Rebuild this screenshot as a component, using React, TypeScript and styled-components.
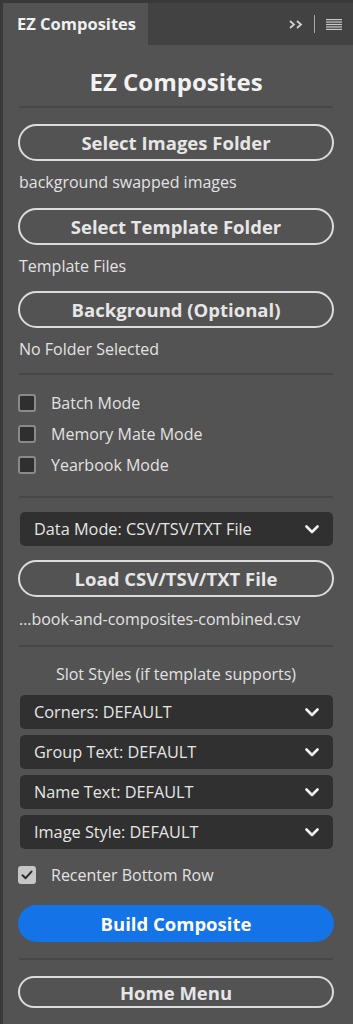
import React from 'react'
import styled, { createGlobalStyle } from 'styled-components'

const GlobalStyle = createGlobalStyle`
  html, body {
    margin: 0;
    padding: 0;
    background: #393939;
  }
  body {
    font-family: 'Open Sans', 'Liberation Sans', sans-serif;
  }
  * {
    box-sizing: border-box;
  }
`

const Frame = styled.div`
  width: 353px;
  height: 1024px;
  padding: 3px 0 0 3px;
  background: #393939;
  display: flex;
  flex-direction: column;
  overflow: hidden;
`

const Header = styled.div`
  height: 42px;
  flex-shrink: 0;
  display: flex;
  align-items: stretch;
  background: #424242;
`

const Tab = styled.div`
  width: 145px;
  background: #535353;
  display: flex;
  align-items: center;
  padding: 0 0 2px 14px;
  color: #f0f0f0;
  font-size: 16.5px;
  font-weight: 700;
`

const HeaderTools = styled.div`
  margin-left: auto;
  display: flex;
  align-items: center;
  gap: 11px;
  padding-right: 11px;
`

const ToolSeparator = styled.span`
  width: 1px;
  height: 18px;
  background: #a8a8a8;
`

const Body = styled.div`
  flex: 1;
  background: #535353;
  padding: 0 19px 0 15px;
  display: flex;
  flex-direction: column;
`

const Title = styled.h1`
  margin: 23px 0 0;
  height: 28px;
  line-height: 28px;
  text-align: center;
  color: #f2f2f2;
  font-size: 24px;
  font-weight: 700;
`

const Divider = styled.div<{ $mt: number }>`
  height: 2px;
  margin: ${(p) => p.$mt}px 1px 0;
  background: #474747;
`

const PillButton = styled.button<{ $mt: number; $primary?: boolean; $height?: number }>`
  margin-top: ${(p) => p.$mt}px;
  width: 100%;
  height: ${(p) => p.$height ?? 37}px;
  border-radius: 20px;
  border: ${(p) => (p.$primary ? 'none' : '2px solid #dcdcdc')};
  background: ${(p) => (p.$primary ? '#1473e6' : 'transparent')};
  color: ${(p) => (p.$primary ? '#ffffff' : '#e6e6e6')};
  font-family: 'Open Sans', 'Liberation Sans', sans-serif;
  font-size: 18.5px;
  font-weight: 700;
  display: flex;
  align-items: center;
  justify-content: center;
  padding: 0;
  cursor: pointer;
`

const Note = styled.div<{ $mt: number }>`
  margin-top: ${(p) => p.$mt}px;
  height: 20px;
  line-height: 20px;
  padding-left: 1px;
  color: #e2e2e2;
  font-size: 16px;
  white-space: nowrap;
`

const SectionLabel = styled.div<{ $mt: number }>`
  margin-top: ${(p) => p.$mt}px;
  height: 20px;
  line-height: 20px;
  text-align: center;
  color: #e2e2e2;
  font-size: 16px;
`

const CheckList = styled.div<{ $mt: number }>`
  margin-top: ${(p) => p.$mt}px;
  display: flex;
  flex-direction: column;
  gap: 13px;
`

const CheckRow = styled.label`
  height: 18px;
  display: flex;
  align-items: center;
  gap: 15px;
  color: #e2e2e2;
  font-size: 16px;
`

const Box = styled.span<{ $checked?: boolean }>`
  width: 18px;
  height: 18px;
  flex-shrink: 0;
  border-radius: 3px;
  border: 2px solid ${(p) => (p.$checked ? '#c6c6c6' : '#8a8a8a')};
  background: ${(p) => (p.$checked ? '#c6c6c6' : '#2f2f2f')};
  display: flex;
  align-items: center;
  justify-content: center;
`

const SelectGroup = styled.div<{ $mt: number }>`
  margin: ${(p) => p.$mt}px 1px 0 2px;
  display: flex;
  flex-direction: column;
  gap: 6px;
`

const SelectBox = styled.div`
  height: 34px;
  border-radius: 5px;
  background: #303030;
  display: flex;
  align-items: center;
  justify-content: space-between;
  padding: 0 14px;
  color: #e6e6e6;
  font-size: 16.3px;
`

const Chevron = () => (
  <svg width='14' height='9' viewBox='0 0 14 9' fill='none'>
    <polyline
      points='1.5,1.5 7,7 12.5,1.5'
      stroke='#f2f2f2'
      strokeWidth='2.6'
      strokeLinecap='round'
      strokeLinejoin='round'
    />
  </svg>
)

const Select = ({ label }: { label: string }) => (
  <SelectBox>
    <span>{label}</span>
    <Chevron />
  </SelectBox>
)

const Check = ({ label, checked }: { label: string; checked?: boolean }) => (
  <CheckRow>
    <Box $checked={checked}>
      {checked && (
        <svg width='12' height='10' viewBox='0 0 12 10' fill='none'>
          <polyline
            points='1.5,5.2 4.6,8.2 10.5,1.6'
            stroke='#2b2b2b'
            strokeWidth='2'
            strokeLinecap='round'
            strokeLinejoin='round'
          />
        </svg>
      )}
    </Box>
    {label}
  </CheckRow>
)

export default function App() {
  return (
    <>
      <GlobalStyle />
      <Frame>
        <Header>
          <Tab>EZ Composites</Tab>
          <HeaderTools>
            <svg width='14' height='9' viewBox='0 0 14 9' fill='none'>
              <polyline points='1,1 5,4.5 1,8' stroke='#cfcfcf' strokeWidth='1.8' />
              <polyline points='8,1 12,4.5 8,8' stroke='#cfcfcf' strokeWidth='1.8' />
            </svg>
            <ToolSeparator />
            <svg width='16' height='11' viewBox='0 0 16 11' fill='#c8c8c8'>
              <rect x='0' y='0' width='16' height='1.2' />
              <rect x='0' y='2.45' width='16' height='1.2' />
              <rect x='0' y='4.9' width='16' height='1.2' />
              <rect x='0' y='7.35' width='16' height='1.2' />
              <rect x='0' y='9.8' width='16' height='1.2' />
            </svg>
          </HeaderTools>
        </Header>
        <Body>
          <Title>EZ Composites</Title>
          <Divider $mt={10} />
          <PillButton $mt={16}>Select Images Folder</PillButton>
          <Note $mt={11}>background swapped images</Note>
          <PillButton $mt={16}>Select Template Folder</PillButton>
          <Note $mt={11}>Template Files</Note>
          <PillButton $mt={15}>Background (Optional)</PillButton>
          <Note $mt={11}>No Folder Selected</Note>
          <Divider $mt={14} />
          <CheckList $mt={19}>
            <Check label='Batch Mode' />
            <Check label='Memory Mate Mode' />
            <Check label='Yearbook Mode' />
          </CheckList>
          <Divider $mt={22} />
          <SelectGroup $mt={14}>
            <Select label='Data Mode: CSV/TSV/TXT File' />
          </SelectGroup>
          <PillButton $mt={14}>Load CSV/TSV/TXT File</PillButton>
          <Note $mt={12}>…book-and-composites-combined.csv</Note>
          <Divider $mt={16} />
          <SectionLabel $mt={17}>Slot Styles (if template supports)</SectionLabel>
          <SelectGroup $mt={11}>
            <Select label='Corners: DEFAULT' />
            <Select label='Group Text: DEFAULT' />
            <Select label='Name Text: DEFAULT' />
            <Select label='Image Style: DEFAULT' />
          </SelectGroup>
          <CheckList $mt={17}>
            <Check label='Recenter Bottom Row' checked />
          </CheckList>
          <PillButton $mt={21} $primary>
            Build Composite
          </PillButton>
          <Divider $mt={16} />
          <PillButton $mt={16} $height={32}>
            Home Menu
          </PillButton>
        </Body>
      </Frame>
    </>
  )
}
